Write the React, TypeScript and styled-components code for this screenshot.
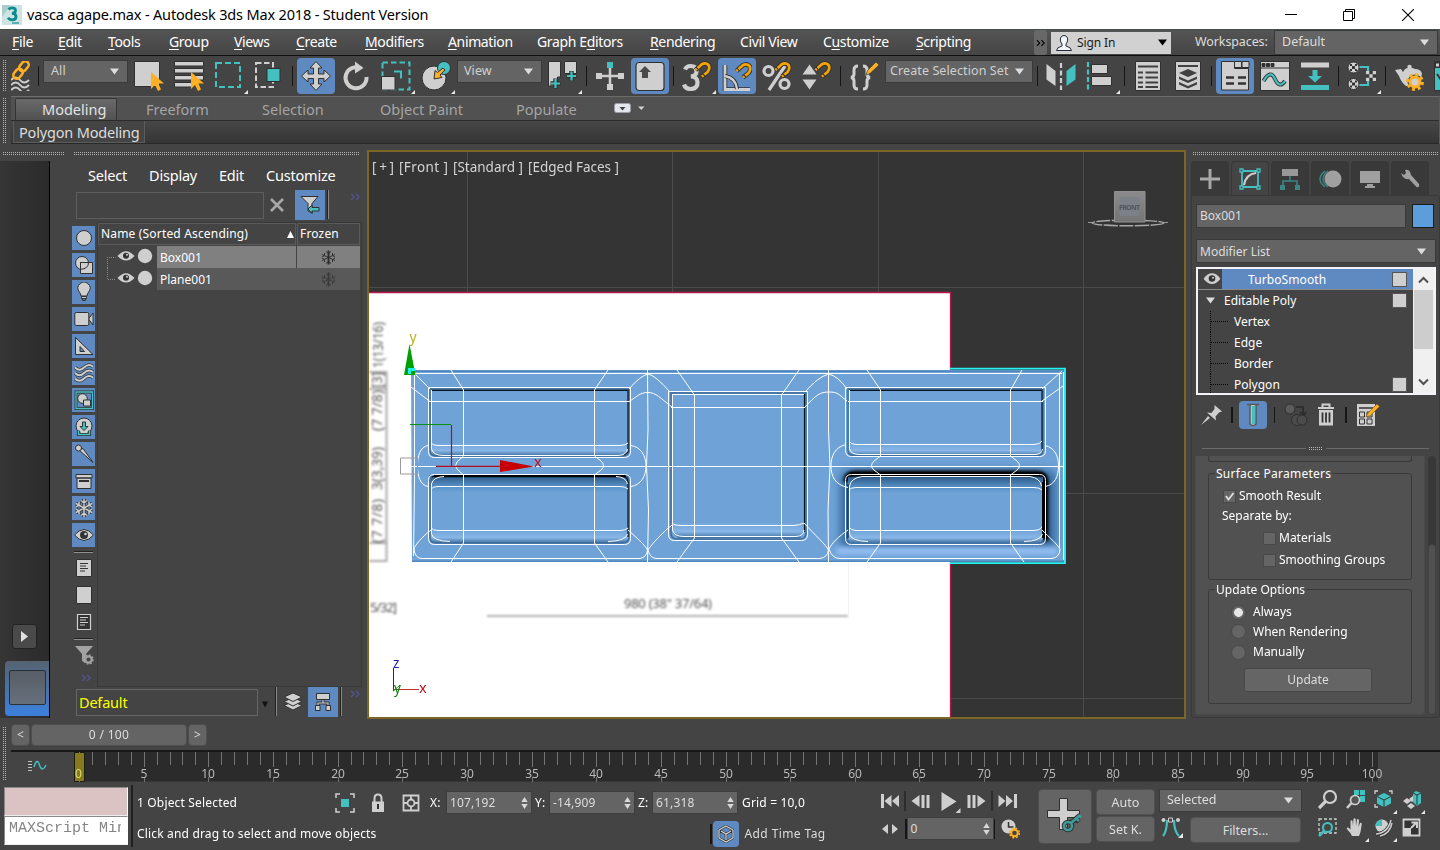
import React from 'react';
import styled, { createGlobalStyle, css } from 'styled-components';

const C = {
  bg: '#444444', field: '#646464', light: '#cfcfcf', teal: '#45c0c0', orange: '#fdb022',
  blue: '#5f8ac1', dark: '#2f2f2f', edge: '#393939', text: '#ffffff', muted: '#dddddd',
};

const Global = createGlobalStyle`
  * { box-sizing: border-box; }
  html, body { margin: 0; padding: 0; overflow: hidden; background: ${C.bg}; }
  body, button { font-family: "Noto Sans", "Open Sans", sans-serif; }
  svg { display: block; flex: none; }
`;

const Window = styled.div`
  width: 1440px; height: 850px; overflow: hidden; background: ${C.bg}; color: ${C.text};
  display: flex; flex-direction: column; font-size: 12px; line-height: 1; white-space: nowrap;
`;

/* ---------- title bar ---------- */
const TitleBar = styled.header`
  height: 29px; flex: none; background: #fff; color: #000; display: flex; align-items: center;
  font-size: 14px; padding-left: 2px;
`;
const Title = styled.h1`
  margin: 0 0 0 5px; font-size: 14.5px; font-weight: 400; flex: 1; letter-spacing: -0.17px;
`;
const CaptionButton = styled.div<{ $shift?: number }>`
  width: 46px; margin-left: 12.5px; display: flex; justify-content: center; padding-right: ${p => p.$shift ?? 0}px;
`;
const CaptionEnd = styled.div` width: 9px; `;

/* ---------- menu ---------- */
const MenuBar = styled.nav`
  height: 27px; flex: none; display: flex; align-items: center; border-top: 1px solid #454f48;
  border-bottom: 1px solid #101010; background: linear-gradient(#545454, #454545);
`;
const MenuItem = styled.span<{ $w: number }>`
  width: ${p => p.$w}px; flex: none; font-size: 14px; letter-spacing: -0.36px; text-underline-offset: 2px; padding-bottom: 2px;
  u { text-decoration-thickness: 1px; }
`;
const MoreButton = styled.div`
  width: 13px; height: 25px; border-radius: 3px; background: #686868; display: flex;
  align-items: center; justify-content: center;
`;
const SignIn = styled.div`
  width: 120px; height: 22px; margin-left: 4px; background: #d1d1d1; color: #1a1a1a; display: flex;
  align-items: center; padding: 0 4px 0 5px; font-size: 12px;
  span { flex: 1; margin-left: 5px; letter-spacing: -0.1px; }
`;
const WorkLabel = styled.span` margin-left: 24px; width: 79px; color: ${C.muted}; font-size: 12.5px; letter-spacing: -0.1px; `;

const Combo = styled.div<{ $w: number; $h?: number; $fs?: number }>`
  width: ${p => p.$w}px; height: ${p => p.$h ?? 24}px; flex: none; background: ${C.field};
  border: 1px solid #3a3a3a; color: ${C.muted}; display: flex; align-items: center;
  justify-content: space-between; padding: 0 8px 0 7px; font-size: ${p => p.$fs ?? 12}px;
`;
const Arrow = ({ c = '#dcdcdc', w = 9 }: { c?: string; w?: number }) => (
  <svg width={w} height="7" viewBox="0 0 9 7" preserveAspectRatio="none"><path d="M0 .5h9L4.500 6.500z" fill={c} /></svg>
);

/* ---------- main toolbar ---------- */
const Toolbar = styled.div` height: 40px; flex: none; display: flex; align-items: flex-start; padding-top: 2px; `;
const dots = css`
  background-image: radial-gradient(circle at 0.5px 0.5px, #b4b4b4 0.6px, transparent 0.7px);
  background-size: 2px 2px;
`;
const VGrip = styled.div<{ $h: number; $mt?: number }>`
  width: 4px; margin: ${p => p.$mt ?? 0}px 0 0 3px; height: ${p => p.$h}px; flex: none; ${dots}
`;
const HGrip = styled.div<{ $w: number }>` height: 4px; width: ${p => p.$w}px; flex: none; ${dots} `;
const ToolButton = styled.div<{ $active?: boolean; $fly?: boolean }>`
  width: 38px; height: 36px; margin-right: 2px; padding: 3px 4px; flex: none; border-radius: 4px; position: relative;
  background: ${p => (p.$active ? C.blue : 'transparent')};
  ${p => p.$fly && css`
    &::after { content: ''; position: absolute; right: 0; bottom: 0; border: 2.5px solid transparent;
      border-right-color: #e8e8e8; border-bottom-color: #e8e8e8; }
  `}
`;
const Divider = styled.div` width: 7px; height: 20px; margin-top: 8px; border-left: 1.5px solid #161616; margin-left: 2px; margin-right: -2px; flex: none; `;
const LinkIcon = styled.div` width: 29px; padding: 3px 0 0 4px; flex: none; `;

const o = { stroke: '#303030', strokeWidth: 1 };
const icons = {
  bind: <g fill="none"><path d="M0 19q5-5 9 0t9 0M0 24q5-5 9 0t9 0M0 29q5-5 9 0t9 0" stroke={C.light} strokeWidth="2" /><g stroke={C.orange} strokeWidth="2.500"><rect x="8" y="2" width="11" height="7" rx="3.500" transform="rotate(-50 13 6)" /><rect x="1" y="9" width="11" height="7" rx="3.500" transform="rotate(-50 7 12)" /></g></g>,
  select: <g><path d="M.5.5h25v25H.5z" fill={C.light} {...o} /><path d="M17 11v17l4-4 3 6 3-1.500-2.500-6H30z" fill={C.orange} /></g>,
  byName: <g><path d="M.5.5h29V5H.5zM.5 7.500h29V12H.5zM.5 14.500h29V19H.5zM.5 21.500h18V26H.5z" fill={C.light} {...o} /><path d="M17 11v17l4-4 3 6 3-1.500-2.500-6H30z" fill={C.orange} /></g>,
  region: <path d="M2 2h24v24H2z" fill="none" stroke={C.teal} strokeWidth="2" strokeDasharray="6 3" />,
  crossing: <g><path d="M2 2h17v24H2z" fill="none" stroke={C.light} strokeWidth="2" strokeDasharray="5.500 2.500" /><path d="M13 7.500h13v13H13z" fill={C.teal} {...o} /></g>,
  move: <path d="M15 .5l6 6.500h-3.500v6h5.500V9l6.500 6-6.500 6v-3.500h-5.500v5.500H21l-6 6.500L9 23h3.500v-5.500H7V21L.5 15 7 9v4h5.500V7H9z" fill={C.light} {...o} />,
  rotate: <g><path d="M20 7.500A10.500 10.500 0 1 0 25.500 16" fill="none" stroke={C.light} strokeWidth="4" /><path d="M14 .5l8.500 6.500-8.500 5.500z" fill={C.light} /></g>,
  scale: <g><path d="M1.500 1.500h27v27h-27z" fill="none" stroke={C.teal} strokeWidth="2" strokeDasharray="5.500 3" /><path d="M.5 15.500h13.500v13.500H.5z" fill={C.light} {...o} /><path d="M13 10.500h7v7" fill="none" stroke={C.teal} strokeWidth="2" /></g>,
  place: <g><circle cx="13" cy="17" r="12" fill={C.light} {...o} /><circle cx="23" cy="7" r="6.500" fill={C.teal} {...o} /><path d="M22 7l-5.500 4.500-2.500-2-1 8.500 8-1.500-2-2.500 5-5z" fill={C.orange} {...o} /></g>,
  pivot: <g><path d="M.5.5h12V16h-3v9h-9zM16.500.5h12v12H16.500z" fill={C.light} {...o} /><path d="M7.500 17.500v10M2.500 22.500h10M23.500 10v10M18.500 15h10" stroke="#333" strokeWidth="4.500" /><path d="M7.500 18v9M3 22.500h9M23.500 10.500v9M19 15h9" stroke={C.teal} strokeWidth="2.200" /></g>,
  manip: <g><path d="M15 6v18M4 15h22" stroke={C.light} strokeWidth="2.500" /><path d="M1 12h6v6H1zM23 12h6v6h-6zM12 23h6v6h-6z" fill={C.light} /><path d="M12 1h6v6h-6z" fill={C.teal} /></g>,
  keyboard: <g><rect x="1" y="1.500" width="28" height="28" rx="3" fill={C.light} stroke="#303030" strokeWidth="1.200" /><path d="M10 5l6 6h-3v6H7v-6H4z" fill="#4a4a4a" /></g>,
  snap3: <path d="M3 8.500Q4.500 5 8.500 5q6 0 6 5.200 0 4.600-5.500 5.300 6.500.3 6.500 6Q15.500 28 8.500 28 3.500 28 2 23.500" fill="none" stroke={C.light} strokeWidth="4.200" />,
  angle: <g fill="none"><path d="M3 4v24.500h25" stroke="#303030" strokeWidth="4.500" /><path d="M3 4v24.500h25" stroke={C.light} strokeWidth="2.800" /><path d="M3 15q11 2 12 13" stroke="#303030" strokeWidth="4" /><path d="M3 15q11 2 12 13" stroke={C.light} strokeWidth="2.400" /></g>,
  percent: <g fill="none" stroke={C.light} strokeWidth="3.200"><circle cx="6.500" cy="10" r="4.500" /><circle cx="22.500" cy="23" r="4.500" /><path d="M23 5L7 29" /></g>,
  spinSnap: <path d="M7.500 3.500l7 10H.5zM7.500 28.500l7-10H.5z" fill={C.light} />,
  sets: <g fill="none"><path d="M9 5q-4 0-4 4v4q0 3-3 3.500Q5 17 5 20v4q0 4 4 4M14 5q4 0 4 4v4q0 3 3 3.500-3 .5-3 3.500v4q0 4-4 4" stroke={C.light} strokeWidth="3" /><path d="M17 14l1.500-4.500L27 1l3 3-9 8.500z" fill={C.orange} stroke="#333" strokeWidth=".6" /></g>,
  mirror: <g><path d="M.5 3l9 7v15l-9-6.500z" fill={C.light} /><path d="M15 2v27" stroke={C.light} strokeWidth="2.200" strokeDasharray="5 2.500" /><path d="M29.500 3l-9 7v15l9-6.500z" fill={C.teal} /></g>,
  align: <g><path d="M2 1v28" stroke={C.teal} strokeWidth="2.200" strokeDasharray="5 2.500" /><path d="M5.500 3.500h16v9h-16zM5.500 15.500h20v9h-20z" fill={C.light} {...o} /></g>,
  list: <g><path d="M2.500.5h25v29h-25z" fill={C.light} {...o} /><path d="M5 5.500h20M5 11.500h5M12.500 11.500h12.500M5 16.500h5M12.500 16.500h12.500M5 21.500h5M12.500 21.500h12.500M5 26h5M12.500 26h12.500" stroke="#404040" strokeWidth="2" /></g>,
  layerDoc: <g><path d="M2.500.5h25v29h-25z" fill={C.light} {...o} /><path d="M5 5h20" stroke="#404040" strokeWidth="2" /><path d="M15 8l9 4-9 4-9-4zM6 15.500l9 4 9-4v2.500l-9 4-9-4zM6 21l9 4 9-4v2.500l-9 4-9-4z" fill="#404040" /></g>,
  ribbon: <g><path d="M1.500.5h13v7h14V29h-27z" fill={C.light} {...o} /><path d="M14.500.5h7v6h-7zM22 .5h7v6h-7z" fill={C.light} {...o} /><path d="M6 16.500h8M18 16.500h8M6 22.500h8M18 22.500h8" stroke="#333" strokeWidth="2.500" /></g>,
  curve: <g><path d="M.5.5h29v29H.5z" fill={C.light} {...o} /><path d="M.5 7h29M2 2.500h3v3H2zM6.500 2.500h3v3h-3zM11 2.500h3v3h-3z" stroke="#303030" fill="#303030" /><path d="M3.500 20q7-12 11.500-2t10 2" fill="none" stroke="#333" strokeWidth="4" /><path d="M3.500 20q7-12 11.500-2t10 2" fill="none" stroke={C.teal} strokeWidth="2.200" /></g>,
  merge: <g><path d="M1 1.500h28v5H1z" fill={C.light} /><path d="M1 24h28v5H1zM12.500 9h5v6H22l-7 6.500L8 15h4.500z" fill={C.teal} /></g>,
  material: <g><path d="M12 6h9v18h-9" fill="none" stroke={C.teal} strokeWidth="2.200" />{[[6.5, 6.5], [6.5, 23]].map(([x, y]) => <g key={y}><circle cx={x} cy={y} r="5.500" fill={C.light} {...o} /><path d={`M${x - 1.5} ${y - 1.5}h3v3h-3zM${x - 3.5} ${y - 3.5}h2v2h-2zM${x + 1.5} ${y - 3.5}h2v2h-2zM${x - 3.5} ${y + 1.5}h2v2h-2zM${x + 1.5} ${y + 1.5}h2v2h-2z`} fill="#333" /></g>)}<path d="M19 10h10v10H19z" fill="#383838" /><path d="M19 10h3.300v3.300H19zM25.700 10H29v3.300h-3.300zM22.300 13.300h3.400v3.400h-3.400zM19 16.700h3.300V20H19zM25.700 16.700H29V20h-3.300z" fill={C.light} /></g>,
  teapot: <g><path d="M1 9l6-1 2 3 2-3q5-3 10 0 6 0 7 5l-3 8-7 4h-6q-5-4-7-10z" fill={C.light} /><circle cx="15.500" cy="6" r="2.200" fill={C.light} /><circle cx="21" cy="21" r="7.500" fill="#444" /><circle cx="21" cy="21" r="7.500" fill="none" stroke={C.orange} strokeWidth="2.800" strokeDasharray="3 2.890" /><circle cx="21" cy="21" r="5" fill={C.light} stroke={C.orange} strokeWidth="3" /></g>,
  frame: <g><path d="M.5.5h29v29H.5z" fill={C.teal} {...o} /><path d="M1 1h28v6H1z" fill="#333" /><path d="M2 2.500h3v3H2z" fill={C.light} /><path d="M3 13l4 6" stroke="#333" strokeWidth="2" /></g>,
};
type IconName = keyof typeof icons;
const Magnet = ({ x = 12, y = 0 }: { x?: number; y?: number }) => (
  <g transform={`translate(${x} ${y})`} fill="none">
    <path d="M1.500 9l6-5.500q4-2.500 7 .5 2 3.500-1 7L8 15.500" stroke="#333" strokeWidth="4.500" />
    <path d="M1.500 9l6-5.500q4-2.500 7 .5 2 3.500-1 7L8 15.500" stroke="#f6a400" strokeWidth="2.700" />
    <path d="M2.800 7.800l.8-.7M9.300 14.300l.8-.8" stroke="#333" strokeWidth="3.500" />
  </g>
);
const Icon = ({ name }: { name: IconName }) => (
  <svg width="30" height="30" viewBox="0 0 30 30">
    {icons[name]}
    {name === 'snap3' && <Magnet x={12} />}
    {name === 'angle' && <Magnet x={13} y={1} />}
    {name === 'percent' && <Magnet x={12} />}
    {name === 'spinSnap' && <Magnet x={12} />}
  </svg>
);
const Tool = ({ name, active, fly }: { name: IconName; active?: boolean; fly?: boolean }) => (
  <ToolButton $active={active} $fly={fly}><Icon name={name} /></ToolButton>
);
const ToolCombo = styled(Combo)<{ $pl?: number }>`
  margin: 2px 2px 0 0; height: 23px; color: #d0d0d0; padding: 0 8px 0 ${p => p.$pl ?? 7}px; font-size: 12.5px; letter-spacing: 0.1px;
`;

/* ---------- ribbon ---------- */
const Ribbon = styled.div` height: 48px; flex: none; display: flex; `;
const RibbonBody = styled.div` flex: 1; margin-left: 4px; border-top: 1px solid #6c6c6c; border-right: 1px solid #5c5c5c; `;
const RibbonTabs = styled.div`
  height: 24px; background: #515151; border-bottom: 1px solid #2b2b2b; display: flex; align-items: center;
  padding-left: 4px; font-size: 14.5px; color: #a4a4a4;
`;
const RibbonTab = styled.span<{ $w: number; $on?: boolean }>`
  width: ${p => p.$w}px; flex: none; padding-top: 2px;
  ${p => p.$on && css`
    height: 22px; align-self: flex-end; padding: 3px 0 0 26px; color: #e2e2e2; border: 1px solid #353535;
    border-bottom: 0; border-radius: 2px 2px 0 0; background: linear-gradient(#6a6a6a, #515151); margin-right: 29px;
  `}
`;
const RibbonPanel = styled.div`
  height: 23px; background: linear-gradient(#474747, #353535); border-bottom: 1px solid #282828;
  padding-left: 2px; display: flex;
`;
const PanelTag = styled.span`
  width: 132px; height: 22px; border: 1px solid #5c5c5c; border-top: 0; padding: 4px 0 0 5px; color: #dcdcdc; font-size: 14.5px;
  background: #444; letter-spacing: -0.18px;
`;

/* ---------- work area ---------- */
const Work = styled.main` height: 575px; flex: none; display: flex; `;
const LeftStrip = styled.aside` width: 50px; flex: none; display: flex; flex-direction: column; padding-top: 8px; `;
const LeftDark = styled.div`
  flex: none; margin-top: 5px; height: 557px; border-right: 1px solid #000; background: linear-gradient(90deg, #353535, #2b2b2b);
  display: flex; flex-direction: column; justify-content: flex-end; overflow: hidden;
`;
const PlayTab = styled.div`
  width: 25px; height: 25px; margin: 0 0 12px 12px; border-radius: 3px; background: #4a4a4a; border: 1px solid #222;
  display: flex; align-items: center; justify-content: center;
`;
const BlueTile = styled.div`
  height: 55px; margin: 0 0 2px 5px; border-radius: 4px 0 0 4px; padding: 9px 3px 10px 4px;
  background: linear-gradient(#566270, #3c7fd9 92%);
`;
const TileFace = styled.div` height: 35px; border: 1.5px solid #2a3038; border-radius: 2px; background: linear-gradient(#585d66, #66707c); `;

const Explorer = styled.section` width: 317px; flex: none; display: flex; flex-direction: column; padding: 8px 0 0 22px; `;
const GripRow = styled.div<{ $ml: number }>` height: 4px; display: flex; margin-left: ${p => p.$ml}px; `;
const ExpMenu = styled.div` display: flex; height: 18px; margin-top: 10px; padding-left: 16px; font-size: 14.5px; align-items: center; `;
const ExpMenuItem = styled.span<{ $w: number }>` width: ${p => p.$w}px; letter-spacing: -0.2px; `;
const SearchRow = styled.div` height: 30px; margin-top: 6px; display: flex; padding-left: 4px; `;
const SearchBox = styled.div` width: 188px; height: 27px; margin-top: 2px; border: 1px solid #5e5e5e; `;
const ClearMark = styled.div` width: 31px; padding: 8px 0 0 6px; `;
const SquareButton = styled.div<{ $on?: boolean }>`
  width: 30px; height: 30px; background: ${p => (p.$on ? C.blue : 'transparent')}; display: flex; align-items: center; justify-content: center;
`;
const ThinSep = styled.div` width: 2px; height: 29px; border-left: 1px solid #222; border-right: 1px solid #888; margin: 0 1px 0 2px; `;
const Chevrons = ({ c = '#55559a', w = 10 }: { c?: string; w?: number }) => (
  <svg width={w} height="8" viewBox="0 0 10 8"><path d="M1 .8L4.200 4 1 7.200M6 .8L9.200 4 6 7.200" fill="none" stroke={c} strokeWidth="1.200" /></svg>
);
const Overflow = styled.div<{ $ml: number; $mt: number }>` margin: ${p => p.$mt}px 0 0 ${p => p.$ml}px; `;
const ExpBody = styled.div` display: flex; margin-top: 2px; height: 465px; `;
const FilterStrip = styled.div` width: 25px; padding-top: 4px; display: flex; flex-direction: column; `;
const FilterCell = styled.div<{ $on?: boolean }>`
  width: 23px; height: 24px; margin-bottom: 3px; flex: none; background: ${p => (p.$on ? C.blue : 'transparent')};
  display: flex; align-items: center; justify-content: center;
`;
const FilterSep = styled.div` width: 19px; height: 2px; margin: 1px 0 3px 2px; border-top: 1px solid #222; border-bottom: 1px solid #909090; flex: none; `;
const Tree = styled.div` width: 265px; border: 1px solid ${C.edge}; `;
const TreeHead = styled.div` display: flex; height: 22px; gap: 1px; margin-bottom: 1px; `;
const HeadCell = styled.div<{ $w: number }>`
  width: ${p => p.$w}px; border: 1px solid #5a5a5a; padding: 0 1px 0 2px; display: flex; align-items: center; justify-content: space-between;
  letter-spacing: 0.17px;
`;
const TreeRow = styled.div` display: flex; height: 22px; align-items: stretch; `;
const TreeGutter = styled.div` width: 59px; `;
const NameCell = styled.div<{ $sel?: boolean }>`
  width: 140px; background: ${p => (p.$sel ? '#808080' : '#595959')}; padding: 2px 0 0 3px; display: flex; align-items: center;
  border-right: 1px solid ${p => (p.$sel ? '#444' : '#595959')};
`;
const FrozenCell = styled(NameCell)` width: 63px; padding: 0; justify-content: center; border-right: 0; `;
const ExpFoot = styled.div` display: flex; height: 30px; padding-left: 4px; `;
const LayerBox = styled.div` width: 182px; height: 27px; margin-top: 2px; border: 1px solid #666; color: #ffff00; font-size: 14.5px; padding: 5px 0 0 2px; letter-spacing: -0.2px; `;
const LayerArrow = styled.div` width: 15px; padding: 14px 0 0 4px; `;

const Flake = ({ c }: { c: string }) => (
  <svg width="15" height="15" viewBox="0 0 15 15" fill="none" stroke={c}>
    <path d="M7.500.5v14" strokeWidth="1.800" />
    <path d="M1 4.500l13 6M14 4.500l-13 6M5 1.500l2.500 2 2.500-2M5 13.500l2.500-2 2.500 2M1 7l2.500-1.500V3M14 7l-2.500-1.500V3M1 8l2.500 1.500V12M14 8l-2.500 1.500V12" strokeWidth=".9" />
  </svg>
);
const Eye = ({ w = 18 }: { w?: number }) => (
  <svg width={w} height={w * 0.64} viewBox="0 0 18 11.500"><path d="M.5 5.700Q9-5 17.500 5.700 9 16.500.5 5.700z" fill={C.light} /><circle cx="9" cy="5.500" r="3.300" fill="#333" /><circle cx="10" cy="4.700" r="1" fill={C.light} /></svg>
);
const crystal = 'M10 1v18M2 5.500l16 9M18 5.500l-16 9M7 2.500L10 5l3-2.500M7 17.500l3-2.500 3 2.500M2 9l3-2V4M15 16v-3l3-2M18 9l-3-2V4M5 16v-3L2 11';
const strip: React.ReactNode[] = [
  <circle cx="10" cy="10" r="7.500" fill={C.light} {...o} />,
  <g fill={C.light} {...o}><circle cx="8" cy="8" r="6.500" /><path d="M6.500 7.500h12v11h-12z" /><path d="M6.500 14.300V7.500h8Q14.500 14 6.500 14.300z" /></g>,
  <g fill={C.light} {...o}><path d="M7 14q0-2-2-4.500A6 6 0 1 1 15 9.500Q13 12 13 14z" /><path d="M7.500 14.500h5v2h-5zM8.500 17h3v1.500h-3z" /></g>,
  <g fill={C.light} {...o}><path d="M14.500 10l4.500-6v12z" /><rect x=".8" y="3.500" width="14" height="13" rx="1.500" /></g>,
  <path d="M1.500 1.500V18.500H19zM6 10.500l4.500 5H6z" fill={C.light} fillRule="evenodd" {...o} />,
  <g fill="none">{[4.5, 10, 15.5].map(y => <g key={y}><path d={`M1 ${y}q4.500 4.500 9 0t9-1`} stroke="#333" strokeWidth="3.400" /><path d={`M1 ${y}q4.500 4.500 9 0t9-1`} stroke={C.light} strokeWidth="1.900" /></g>)}</g>,
  <g><path d="M2 2h16.500v16.500H2z" fill="none" stroke="#303030" strokeWidth="2.800" /><path d="M2 2h16.500v16.500H2z" fill="none" stroke={C.teal} strokeWidth="1.300" /><circle cx="8.500" cy="8.500" r="4.800" fill={C.light} {...o} /><path d="M9.500 10h7v6h-7z" fill={C.light} {...o} /></g>,
  <g><circle cx="10" cy="9" r="8" fill={C.light} {...o} /><path d="M8.500 5h3v4.500H14l-4 4-4-4h2.500z" fill={C.teal} {...o} /><path d="M4.500 13.500v4h11v-4" fill="none" stroke="#303030" strokeWidth="3.200" /><path d="M4.500 13.500v4h11v-4" fill="none" stroke={C.teal} strokeWidth="1.500" /></g>,
  <g fill={C.light} {...o}><path d="M5 6l4-1.500L19 18.500z" /><circle cx="4.500" cy="4" r="3" /></g>,
  <g fill={C.light} {...o}><path d="M3 7h14v10.500H3zM2 3.500h16v3.500H2z" /><path d="M5 10h10" strokeWidth="2" /></g>,
  <g fill="none"><path d={crystal} stroke="#333" strokeWidth="3.200" /><path d={crystal} stroke={C.light} strokeWidth="1.500" /></g>,
  <g><path d="M.5 10Q10-1 19.500 10 10 21 .5 10z" fill={C.light} {...o} /><circle cx="10" cy="10" r="4" fill="#333" /><circle cx="11.500" cy="9" r="1.300" fill={C.light} /></g>,
];
const docIcons: React.ReactNode[] = [
  <g><path d="M2.500 1.500h15v17h-15z" fill={C.light} {...o} /><path d="M6 5.500h8M6 8h6M6 10.500h8M6 13h5" stroke="#333" /></g>,
  <path d="M2.500 1.500h15v17h-15z" fill={C.light} {...o} />,
  <g><path d="M3.500 2.500h13v15h-13z" fill="#333" stroke={C.light} strokeWidth="1.200" /><path d="M6 5.500h8M6 8h6M6 10.500h8M6 13h5" stroke={C.light} /></g>,
];
const S20 = ({ children }: { children?: React.ReactNode }) => <svg width="20" height="20" viewBox="0 0 20 20">{children}</svg>;

/* ---------- viewport ---------- */
const Viewport = styled.section` width: 819px; height: 569px; margin-top: 6px; border: 2px solid #7b6626; flex: none; background: #343434; `;

const frame = (x1: number, y1: number, x2: number, y2: number, topR = 0, botR = 6) =>
  `M${x1 + topR} ${y1}H${x2 - topR}Q${x2} ${y1} ${x2} ${y1 + topR}V${y2 - botR}Q${x2} ${y2} ${x2 - botR} ${y2}H${x1 + botR}Q${x1} ${y2} ${x1} ${y2 - botR}V${y1 + topR}Q${x1} ${y1} ${x1 + topR} ${y1}z`;

const Scene = () => (
  <svg width="815" height="565" viewBox="369 152 815 565" fontFamily="Noto Sans, sans-serif">
    <defs>
      <filter id="soft" x="-10%" y="-10%" width="120%" height="120%"><feGaussianBlur stdDeviation="0.900" /></filter>
      <filter id="deep" x="-20%" y="-30%" width="140%" height="160%"><feGaussianBlur stdDeviation="4.500" /></filter>
      <filter id="mid" x="-20%" y="-30%" width="140%" height="160%"><feGaussianBlur stdDeviation="1.800" /></filter>
      <filter id="glow" x="-20%" y="-100%" width="140%" height="300%"><feGaussianBlur stdDeviation="2.500" /></filter>
      <linearGradient id="cup" x1="0" y1="0" x2="0" y2="1"><stop offset="0" stopColor="#6fa3d7" /><stop offset=".8" stopColor="#6fa3d7" /><stop offset=".92" stopColor="#88b6e8" /><stop offset="1" stopColor="#3f709f" /></linearGradient>
      <linearGradient id="cupLow" x1="0" y1="0" x2="0" y2="1"><stop offset="0" stopColor="#2c5a86" /><stop offset=".16" stopColor="#5a93ca" /><stop offset=".25" stopColor="#6fa3d7" /><stop offset=".8" stopColor="#6fa3d7" /><stop offset=".92" stopColor="#88b6e8" /><stop offset="1" stopColor="#3f709f" /></linearGradient>
      <linearGradient id="lip" x1="0" y1="0" x2="0" y2="1"><stop offset="0" stopColor="#6fa3d7" /><stop offset=".6" stopColor="#88b6e8" /><stop offset="1" stopColor="#3f709f" /></linearGradient>
      <linearGradient id="cube" x1="0" y1="0" x2="0" y2="1"><stop offset="0" stopColor="#8b8b8b" /><stop offset="1" stopColor="#747474" /></linearGradient>
      <clipPath id="body"><path d="M411 370H1065V562H411z" /></clipPath>
    </defs>
    <path d="M467.500 152V717M672.500 152V717M878.500 152V717M1083.500 152V717M369 287.500H1184M369 493.500H1184M369 698.500H1184" stroke="#4b4b4b" />
    <path d="M369 293H950V717H369z" fill="#fff" />
    <path d="M369 292.500H950.500V717" fill="none" stroke="#b8174e" strokeWidth="1.300" />
    <g filter="url(#soft)" fill="#555">
      <path d="M369 372H386.500V561H369M369 389H386M369 543H386" fill="none" stroke="#aaa" strokeWidth="2" />
      <g fontSize="14">
        <text transform="translate(382 543) rotate(-90)" textLength="44">(7 7/8)</text>
        <text transform="translate(382 490) rotate(-90)" textLength="43" lengthAdjust="spacingAndGlyphs">3(3,39)</text>
        <text transform="translate(382 431) rotate(-90)" textLength="41">(7 7/8)</text>
        <text transform="translate(382 388) rotate(-90)" textLength="16" lengthAdjust="spacingAndGlyphs">[3]</text>
        <text transform="translate(383 368) rotate(-90)" textLength="46" lengthAdjust="spacingAndGlyphs">1(13/16)</text>
      </g>
      <text x="370" y="612" fontSize="13" textLength="27">5/32]</text>
      <text x="624" y="608" fontSize="13" textLength="88">980 (38" 37/64)</text>
      <path d="M487 616H848" stroke="#999" strokeWidth="1.600" />
    </g>
    <path d="M848.500 562V616" stroke="#f2f2f2" />

    <path d="M411 370H1065V562H412z" fill="#6fa3d7" />
    <path d="M411 371.200H1064M412 561.200H1064" stroke="#4f86bb" strokeWidth="1.600" />
    <g clipPath="url(#body)">
      <rect x="840" y="470" width="216" height="80" rx="8" fill="#27598a" opacity=".75" filter="url(#deep)" />
      <rect x="836" y="547" width="222" height="8" rx="4" fill="#94c0f4" filter="url(#glow)" />
      <path d="M846 482Q846 473 856 473H1036Q1046 473 1046 482V541" fill="none" stroke="#000" strokeWidth="5" filter="url(#mid)" />
      <path d="M850 474.500H1041Q1045 476 1045 484V538" fill="none" stroke="#000" strokeWidth="4" />
      <path d={frame(430, 389, 629, 456)} fill="url(#cup)" stroke="#3c6b98" strokeWidth="1.400" />
      <path d={frame(430, 476, 629, 543)} fill="url(#cupLow)" stroke="#3c6b98" strokeWidth="1.400" />
      <path d={frame(671, 393, 806, 539)} fill="#6fa3d7" stroke="#3c6b98" strokeWidth="1.400" />
      <path d="M673 522H804V532L800 538H678L673 532z" fill="url(#lip)" />
      <path d={frame(848, 389, 1043, 456)} fill="url(#cup)" stroke="#3c6b98" strokeWidth="1.400" />
      <path d={frame(848, 477, 1043, 543)} fill="url(#cupLow)" />
      <path d="M848 484V538" stroke="#1a3a5a" strokeWidth="1.500" />
      <path d="M431 390.300H628V452L624 455M432 477Q434 476 440 476H620Q628 476 628 482V537M672 394.500H804.500V532M849 390.300H1042V452" fill="none" stroke="#0a121c" strokeWidth="1.200" />
      <path d="M434 476H626" stroke="#000" strokeWidth="2.500" />
      <path d="M1043.500 482V538" stroke="#000" strokeWidth="3" />
      <g fill="none" stroke="#fff" strokeWidth="1">
        <path d="M412 373.500H1062M411 466.500H1064M414.500 372V480L413.500 556M647.500 370L648 430 646.500 466 648.500 510 647.500 562M828.500 370V430L830 466 828 510 828.500 562M1059.500 374V548M1063.500 372V560" />
        <path d={frame(428.5, 387.5, 630.5, 457.5)} /><path d={frame(428.5, 474.5, 630.5, 544.5, 6)} />
        <path d={frame(668.5, 391.5, 807.5, 540.5)} />
        <path d={frame(845.5, 387.5, 1045.5, 456.5)} /><path d={frame(845.5, 474.5, 1045.5, 544.5, 6)} />
        <path d="M444 476.500Q433 477 431.500 484V534Q433 541 450 541.500M616 476.500Q626 477 627.500 484M627.500 534Q626 541 608 541.500M862 476.500Q851 478 849.500 486V534Q851 541 868 541.500M862 476.500H1030Q1040 478 1041.500 486M1042.500 534Q1041 541 1024 541.500" />
        <path d="M431.500 390V449Q433 455.500 444 455.500H618Q627 455 627.500 449M849.500 390V449Q851 454.500 860 454.500H1035Q1042 454 1042.500 449M672.500 395V530Q674 536.500 684 536.500H796Q804 536 804 530M672 394.500H804" />
        <path d="M430 401.500H629M431 443Q433 445.500 438 445.500H620Q625 445.500 628 443M431 489Q433 486.500 438 486.500H620Q625 486.500 628 489M431 528Q433 530.500 438 530.500H620Q625 530.500 628 528M848 401.500H1043M849 441Q851 444.500 856 444.500H1034Q1040 444.500 1042 441M849 490Q851 487.500 856 487.500H1034Q1040 487.500 1042 490M849 527Q851 530.500 856 530.500H1034Q1040 530.500 1042 527M671 407.500H805M672 523Q674 525.500 680 525.500H794Q800 525 804 523" />
        <path d="M451 370L463.500 390V456L457 462Q454 466 457 469L463.500 475V543L451 562M608 370L594.500 390V456L601 461Q606 466 601 470L594.500 475V543L608 562" />
        <path d="M867 370L880.500 390V456L874 461Q869 466 874 470L880.500 475V543L867 562M1022 370L1010.500 390V456L1017 461Q1022 466 1017 470L1010.500 475V543L1024 562" />
        <path d="M677 370L694.500 395V538L677 562M799 370L781.500 395V538L799 562" />
        <path d="M415 374L430 389M411 387L430 401.500M629 389Q640 376 648 374Q655 375 670 392M629 401.500C638 396 640 392.500 648 392.500S660 398 672 407M805 392Q818 377 828.500 374Q838 376 847 389M805 407C816 395 820 392 829 392S838 394 847 401M1042 389L1062 371M1042 401L1063 386" />
        <path d="M428 445.500C420 447 417.500 456 417.500 466S420 485 428 486.500M631 445.500C641 447 646 456 646 466S641 485 631 486.500M846 444.500C835 447 831 456 831 466S835 485 848 487.500M1045 445.500C1055 448 1058.500 456 1058.500 466S1055 485 1045 486.500" />
        <path d="M431 530C422 537 415 545 414 549Q415 558.500 422 558.500H640Q647 557 647.500 550C645 545 636 537 628 530M672 525C662 533 651 545 648 550Q650 558.500 657 558.500H820Q828 557 828.500 550C826 545 815 535 804 523M848 530C838 537 832 543 829 549Q832 558.500 840 558.500H1052Q1060 557 1060 549C1057 544 1050 538 1042 530" />
      </g>
    </g>
    <path d="M950 368.700H1065V563.200H950" fill="none" stroke="#25f3f3" strokeWidth="1.800" />

    <path d="M400.500 458V474H417.500V458z" fill="none" stroke="#9a9a9a" strokeWidth="1" />
    <path d="M410 424.500H451" stroke="#109010" strokeWidth="1.200" /><path d="M451.500 425V466M436 466.300H500" stroke="#b01020" strokeWidth="1.200" fill="none" />
    <path d="M500 460L534 466.500 500 472z" fill="#c80000" />
    <path d="M409.500 344L415.500 375H404z" fill="#00a000" /><path d="M408 368H415V374H408z" fill="#20f0f0" /><path d="M411 371H415V375H411z" fill="#00a000" />
    <text x="409.500" y="342" fontSize="14" fill="#b8b020">y</text>
    <text x="534" y="467" fontSize="14.500" fill="#b81420">x</text>
    <path d="M393.500 668V691" stroke="#2020a8" /><path d="M393.500 689.500H419" stroke="#c03030" /><path d="M393.500 691L400 685" stroke="#20a020" />
    <text x="393" y="667.500" fontSize="13.500" fill="#2020a8">z</text><text x="394" y="693" fontSize="13.500" fill="#108010">y</text><text x="419" y="693" fontSize="14.500" fill="#b81420">x</text>

    <g fontSize="13.500" fill="#d4d4d4">
      <text x="372" y="171.500" textLength="22">[ + ]</text>
      <text x="399" y="171.500" textLength="49">[Front ]</text>
      <text x="453" y="171.500" textLength="70">[Standard ]</text>
      <text x="528" y="171.500" textLength="91">[Edged Faces ]</text>
    </g>

    <ellipse cx="1128" cy="223" rx="36" ry="2.800" fill="none" stroke="#a8a8a8" strokeWidth="1.400" strokeDasharray="14 1.500" />
    <path d="M1088 222.500h5M1163 222.500h5" stroke="#999" />
    <path d="M1114.500 191.500H1145V222H1114.500z" fill="url(#cube)" stroke="#909090" /><path d="M1120 197H1139.500V216H1120z" fill="#7b8187" />
    <text x="1119" y="209.500" fontSize="7" fontWeight="700" fill="#50565e" textLength="21">FRONT</text>
  </svg>
);

/* ---------- command panel ---------- */
const Command = styled.aside` width: 249px; margin-left: 5px; flex: none; padding-top: 8px; `;
const CmdTabs = styled.div` display: flex; gap: 2px; margin-top: 5px; `;
const CmdTab = styled.div<{ $on?: boolean }>`
  width: 38px; height: 34px; border-radius: 4px 4px 0 0; border: 1px solid #383838; border-bottom: 0;
  background: ${p => (p.$on ? C.bg : '#393939')}; display: flex; align-items: center; justify-content: center; padding-top: 1px;
`;
const CmdBody = styled.div` height: 523px; border: 1px solid ${C.edge}; border-radius: 0 3px 3px 3px; padding: 8px 3px 0 4px; `;
const NameRow = styled.div` display: flex; justify-content: space-between; padding-right: 2px; `;
const NameField = styled.div` width: 210px; height: 24px; background: ${C.field}; border: 1px solid #3a3a3a; padding: 5px 0 0 3px; color: ${C.muted}; `;
const Swatch = styled.div` width: 22px; height: 24px; background: #5d9dd9; border: 1px solid #1c1c1c; `;
const ModCombo = styled(Combo)` margin-top: 11px; padding: 1px 9px 0 3px; `;
const Stack = styled.div` width: 240px; height: 128px; margin-top: 4px; border: 2px solid #f4f4f8; display: flex; overflow: hidden; `;
const StackRows = styled.div` flex: 1; `;
const StackRow = styled.div<{ $sel?: boolean }>`
  height: 21px; display: flex; align-items: center; border-bottom: ${p => (p.$sel ? '1px solid #8a8a8a' : '0')};
`;
const StackLabel = styled.div<{ $indent: number; $sel?: boolean }>`
  flex: 1; height: 20px; display: flex; align-items: center; justify-content: space-between; padding: ${p => (p.$sel ? 1 : 0)}px 6px 0 ${p => p.$indent}px;
  background: ${p => (p.$sel ? C.blue : 'transparent')}; letter-spacing: ${p => (p.$sel ? '0.1px' : '0')};
`;
const StackGutter = styled.div<{ $w: number; $pl?: number }>` width: ${p => p.$w}px; padding-left: ${p => p.$pl ?? 0}px; flex: none; display: flex; justify-content: center; `;
const StateBox = styled.i` width: 15px; height: 15px; background: ${C.light}; border: 1px solid #555; `;
const StackScroll = styled.div`
  width: 21px; background: #f0f0f0; display: flex; flex-direction: column; align-items: center; justify-content: space-between; padding: 7px 0;
`;
const ScrollThumb = styled.div` width: 19px; height: 59px; background: #cdcdcd; margin: 0 0 23px; `;
const StackTools = styled.div` height: 30px; margin-top: 5px; display: flex; align-items: center; padding-left: 5px; `;
const StackTool = styled.div<{ $on?: boolean; $ml?: number }>`
  width: 28px; height: 28px; border-radius: 4px; margin-left: ${p => p.$ml ?? 0}px; display: flex; align-items: center; justify-content: center;
  background: ${p => (p.$on ? C.blue : 'transparent')};
`;
const StackSep = styled.div<{ $ml: number }>` width: 1.5px; height: 16px; background: #161616; margin-left: ${p => p.$ml}px; `;
const Splitter = styled.div` margin: 15px 7px 0 6px; height: 7px; display: flex; align-items: center; gap: 3px; `;
const SplitLine = styled.div` flex: 1; height: 1px; background: #6a6a6a; `;
const RollWrap = styled.div` display: flex; margin: 4px 0 0 -1px; height: 259px; `;
const Rollout = styled.div` width: 230px; background: #515151; border-radius: 0 0 3px 3px; border: 1px solid #494949; border-top: 0; padding: 0 12px; `;
const GroupTail = styled.div` height: 6px; border: 1px solid ${C.edge}; border-top: 0; border-radius: 0 0 3px 3px; `;
const Group = styled.fieldset<{ $h: number; $mt: number; $ls?: number }>`
  height: ${p => p.$h}px; margin: ${p => p.$mt}px 0 0; padding: 0; border: 1px solid ${C.edge}; border-radius: 3px; min-width: 0;
  legend { margin-left: 6px; padding: 0 1px; line-height: 13px; letter-spacing: ${p => p.$ls ?? 0}px; }
`;
const OptRow = styled.div<{ $ml: number; $h: number; $mt?: number }>` height: ${p => p.$h}px; margin: ${p => p.$mt ?? 0}px 0 0 ${p => p.$ml}px; display: flex; align-items: center; gap: 3px; `;
const Check = styled.div` width: 13px; height: 13px; background: #656565; border: 1px solid #494949; `;
const Radio = styled.div<{ $on?: boolean }>`
  width: 15px; height: 15px; border-radius: 50%; border: 1px solid #494949; margin-right: 4px;
  background: ${p => (p.$on ? 'radial-gradient(circle, #e6e6e6 4px, #666 4.8px)' : '#656565')};
`;
const UpdateButton = styled.div`
  width: 128px; height: 24px; margin: 6px 0 0 35px; border-radius: 3px; border: 1px solid #484848; background: #656565; color: ${C.muted};
  display: flex; align-items: center; justify-content: center;
`;
const RollScroll = styled.div` width: 8px; margin-left: 3px; background: #383838; border-radius: 4px; padding-top: 88px; `;
const RollThumb = styled.div` height: 171px; border-radius: 4px; background: #515151; border: 1px solid #424242; `;

/* ---------- time slider ---------- */
const TimeRow = styled.div` height: 64px; flex: none; display: flex; `;
const TimeBody = styled.div` width: 1429px; margin-left: 4px; `;
const SliderRow = styled.div` height: 31px; display: flex; gap: 1px; padding-top: 5px; `;
const SliderButton = styled.div<{ $w: number }>`
  width: ${p => p.$w}px; height: 22px; background: ${C.field}; border: 1px solid #4e4e4e; border-radius: 4px; color: ${C.muted};
  display: flex; align-items: center; justify-content: center; letter-spacing: ${p => (p.$w > 30 ? 0.3 : 0)}px;
`;
const TrackRow = styled.div` height: 33px; border-top: 2px solid #181818; display: flex; `;
const TrackKey = styled.div` width: 63px; padding: 8px 0 0 16px; `;

const frames = Array.from({ length: 101 }, (_, i) => i);
const fx = (f: number) => Math.round(5 + f * 12.93) + 0.5;
const Track = () => (
  <svg width="1366" height="30" viewBox="0 0 1366 30" fontFamily="Noto Sans, sans-serif">
    <path d="M0 0h1304v29.500H0z" fill="#2b2b2b" />
    <path d="M0 0h11v30H0z" fill="#1c1c10" /><path d="M1 1h9v28H1z" fill="#857b1e" />
    {frames.map(f => <path key={f} d={f % 5 ? `M${fx(f)} 0v13` : `M${fx(f)} 0v15M${fx(f)} 25v5`} stroke="#747474" />)}
    {frames.filter(f => f % 5 === 0).map(f => (
      <text key={f} x={fx(f) - (f ? 0.5 : 1)} y="25.500" fontSize="12" textAnchor="middle" fill={f ? '#b8b8b8' : '#e0d870'}>{f}</text>
    ))}
  </svg>
);

/* ---------- status bar ---------- */
const Status = styled.footer` height: 67px; flex: none; display: flex; `;
const Listener = styled.div` width: 124px; margin: 4px 0 0 4px; flex: none; `;
const ListenerLine = styled.div<{ $pink?: boolean }>`
  height: 29px; background: ${p => (p.$pink ? '#dcc3c3' : '#fff')}; border: 1.5px solid #8a8a8a; border-right-color: #fff; border-bottom-color: #eee;
  color: #858585; font: 15px "Liberation Mono", monospace; padding: 3px 0 0 4px; letter-spacing: 0;
  span { display: block; width: 112px; overflow: hidden; }
`;
const StatusSep = styled.div` width: 2px; height: 62px; margin: 2px 0 0 3px; background: #202020; flex: none; `;
const Info = styled.div` width: 745px; margin-left: 3px; padding-top: 3px; flex: none; `;
const InfoRow = styled.div` height: 31px; display: flex; align-items: center; padding-left: 1px; padding-top: 2px; `;
const InfoText = styled.span<{ $w: number; $ml?: number; $dim?: boolean }>`
  width: ${p => p.$w}px; margin-left: ${p => p.$ml ?? 0}px; flex: none; color: ${p => (p.$dim ? '#ddd' : '#fff')}; letter-spacing: ${p => (p.$dim ? 0.4 : 0.17)}px;
`;
const Coord = styled.div<{ $w?: number }>`
  width: ${p => p.$w ?? 86}px; height: 23px; background: ${C.field}; border: 1px solid #3e3e3e; color: ${C.muted};
  display: flex; align-items: center; justify-content: space-between; padding: 0 3px 0 3px; flex: none; letter-spacing: 0.15px;
`;
const Spin = () => <svg width="7" height="12" viewBox="0 0 7 12"><path d="M3.500 0l3.200 5H.3zM3.500 12L.3 7h6.400z" fill="#d8d8d8" /></svg>;
const TagToggle = styled.div` width: 26px; height: 26px; border-radius: 4px; background: ${C.blue}; display: flex; align-items: center; justify-content: center; margin: 0 6px 0 1px; `;
const SmallSep = styled.div` width: 1.5px; height: 20px; background: #161616; flex: none; `;
const StatusGap = styled.div<{ $w: number }>` width: ${p => p.$w}px; flex: none; `;
const Playback = styled.div` width: 157px; flex: none; padding-top: 5px; `;
const PlayRow = styled.div` height: 27px; display: flex; align-items: center; `;
const KeyPad = styled.div` width: 54px; height: 55px; margin-top: 6px; border-radius: 4px; background: ${C.field}; border: 1px solid #4e4e4e; flex: none; padding: 7px 0 0 7px; `;
const Column = styled.div<{ $w: number; $ml: number; $gap?: number }>`
  width: ${p => p.$w}px; margin-left: ${p => p.$ml}px; padding-top: 6px; display: flex; flex-direction: column; gap: ${p => p.$gap ?? 1}px; flex: none;
`;
const Push = styled.div<{ $w: number }>`
  width: ${p => p.$w}px; height: 26px; background: ${C.field}; border: 1px solid #505050; border-radius: 4px; color: ${C.muted};
  display: flex; align-items: center; justify-content: center; font-size: 12.5px; padding-top: 2px;
`;
const FilterRow = styled.div` display: flex; gap: 7px; padding-left: 2px; padding-top: 3px; `;
const NavGrid = styled.div` display: grid; grid-template-columns: repeat(4, 28px); grid-auto-rows: 28px; margin-left: 15px; padding-top: 7px; `;
const NavCell = styled.div<{ $fly?: boolean }>`
  padding: 0 0 0 1px; position: relative;
  ${p => p.$fly && css`&::after { content: ''; position: absolute; right: 4px; bottom: 4px; border: 2.5px solid transparent;
      border-right-color: #e8e8e8; border-bottom-color: #e8e8e8; }`}
`;
const navIcons: [React.ReactNode, boolean][] = [
  [<g fill="none" stroke={C.light}><circle cx="12" cy="7" r="6" strokeWidth="2.200" /><path d="M7.500 11.500L1 18" strokeWidth="3.200" /></g>, false],
  [<g><path d="M8 0h5v5H8zM14 0h5v5h-5zM8 6h5v6H8zM14 6h5v6h-5z" fill={C.teal} /><circle cx="9" cy="10" r="4.500" fill="#555" stroke={C.light} strokeWidth="1.700" /><path d="M5.500 13L1 18" stroke={C.light} strokeWidth="2.600" /></g>, false],
  [<g fill="none"><path d="M1 4V1h3M15 1h3v3M1 14v3h3" stroke={C.light} strokeWidth="1.300" /><path d="M10 3l7 3.500v7L10 17l-7-3.500v-7z" fill={C.teal} /><path d="M3 6.500l7 3.500 7-3.500M10 10v7" stroke="#333" /></g>, true],
  [<g><path d="M5 8l4 3-4 3-4-3zM11 6l3 3-4 3-3-3zM9 13l4 3-4 3-4-3z" fill={C.light} /><path d="M14 1l5 2v10l-4 3-4-4V3z" fill={C.teal} /><path d="M11 3l4 2 4-2M15 5v10" stroke="#333" fill="none" /></g>, true],
  [<g fill="none"><path d="M1 1h17v14H1z" stroke={C.light} strokeWidth="1.300" strokeDasharray="3 2" /><circle cx="9.500" cy="9.500" r="4.500" stroke={C.teal} strokeWidth="2" fill="#444" /><path d="M6 13l-5 5" stroke={C.teal} strokeWidth="2.600" /></g>, false],
  [<path d="M6 18q-1-3-4-5.500L.5 10q1.500-1.500 4 1.500V3q1-1.500 2 0l.5 5 .5-7q1-1.500 2.200 0l.3 7 1-6.500q1.300-1 2 .5l-.5 7 1.500-4q1.500-.8 1.800.8L14.500 14 13 18z" fill={C.light} />, true],
  [<g fill="none"><circle cx="8" cy="8" r="6.500" fill={C.light} /><path d="M8 8V1.500A6.500 6.500 0 0 0 1.500 8z" fill={C.teal} /><path d="M2 16Q14 15 17 2M6 18q10-2 12-13" stroke="#333" strokeWidth="3" /><path d="M2 16Q14 15 17 2M6 18q10-2 12-13" stroke={C.light} strokeWidth="1.500" /></g>, true],
  [<g><path d="M1.500 1.500h16v16h-16z" fill="#333" stroke={C.light} strokeWidth="1.800" /><path d="M2 10h7v7H2z" fill={C.light} /><path d="M9 10l5-5M9.500 4.500H15V10" fill="none" stroke={C.light} strokeWidth="2" /></g>, false],
];

/* label, index of the mnemonic letter (-1 for none), slot width */
const menus: [string, number, number][] = [
  ['File', 0, 46], ['Edit', 0, 50], ['Tools', 0, 61], ['Group', 0, 65], ['Views', 0, 62], ['Create', 0, 69], ['Modifiers', 0, 83],
  ['Animation', 0, 89], ['Graph Editors', 7, 113], ['Rendering', 0, 90], ['Civil View', -1, 83], ['Customize', 1, 93], ['Scripting', 0, 118],
];

export default function App() {
  return (
    <Window>
      <Global />
      <TitleBar>
        <svg width="20" height="20" viewBox="0 0 20 20"><path d="M0 0h20v20H0z" fill="#cfe3e3" /><path d="M0 0L9 0 0 12z" fill="#a9cccc" /><path d="M6.500 4.500Q8 2.800 10 2.800q3.500 0 3.500 2.800 0 2.400-3.500 2.800 4 .3 4 3.300 0 3.100-4 3.100-2.700 0-4-2" fill="none" stroke="#0c8a90" strokeWidth="2.800" /><path d="M10 18h7" stroke="#58b0b0" strokeWidth="2" /></svg>
        <Title>vasca agape.max - Autodesk 3ds Max 2018 - Student Version</Title>
        <CaptionButton><svg width="12" height="12"><path d="M0 5.500h12" stroke="#000" /></svg></CaptionButton>
        <CaptionButton $shift={2}><svg width="12" height="12" fill="none" stroke="#000"><path d="M.5 2.500h9v9h-9zM2.500 2V.5h9v9H10" /></svg></CaptionButton>
        <CaptionButton><svg width="12" height="12"><path d="M0 0l12 12M12 0L0 12" stroke="#000" strokeWidth="1.100" /></svg></CaptionButton>
        <CaptionEnd />
      </TitleBar>

      <MenuBar>
        <MenuItem $w={12} />
        {menus.map(([t, u, w]) => (
          <MenuItem key={t} $w={w}>
            {u < 0 ? t : <>{t.slice(0, u)}<u>{t[u]}</u>{t.slice(u + 1)}</>}
          </MenuItem>
        ))}
        <MoreButton><Chevrons c="#000" w={9} /></MoreButton>
        <SignIn>
          <svg width="16" height="16" viewBox="0 0 16 16"><path d="M.5 15.500q0-3 5.500-4.500V9Q3.500 6 4.500 3q1-2.500 3.500-2.500T11.500 3q1 3-1.500 6v2q5.500 1.500 5.500 4.500z" fill="#f4f6fa" stroke="#222c3c" /></svg>
          <span>Sign In</span><Arrow c="#000" w={9} />
        </SignIn>
        <WorkLabel>Workspaces:</WorkLabel>
        <Combo $w={164} $h={25} $fs={12.5}>Default<Arrow /></Combo>
      </MenuBar>

      <Toolbar>
        <VGrip $h={32} $mt={2} />
        <LinkIcon><svg width="20" height="30" viewBox="0 0 20 30">{icons.bind}</svg></LinkIcon>
        <Divider />
        <ToolCombo $w={85}>All<Arrow /></ToolCombo>
        <Tool name="select" /><Tool name="byName" /><Tool name="region" fly /><Tool name="crossing" />
        <Divider />
        <Tool name="move" active /><Tool name="rotate" /><Tool name="scale" fly /><Tool name="place" fly />
        <ToolCombo $w={85} $pl={6}>View<Arrow /></ToolCombo>
        <Tool name="pivot" fly />
        <Divider />
        <Tool name="manip" /><Tool name="keyboard" active />
        <Divider />
        <Tool name="snap3" fly /><Tool name="angle" active /><Tool name="percent" /><Tool name="spinSnap" />
        <Divider />
        <Tool name="sets" />
        <ToolCombo $w={148} $pl={4}>Create Selection Set<Arrow /></ToolCombo>
        <Divider />
        <Tool name="mirror" /><Tool name="align" fly />
        <Divider />
        <Tool name="list" /><Tool name="layerDoc" />
        <Divider />
        <Tool name="ribbon" active /><Tool name="curve" /><Tool name="merge" />
        <Divider />
        <Tool name="material" fly />
        <Divider />
        <Tool name="teapot" /><Tool name="frame" />
      </Toolbar>

      <Ribbon>
        <VGrip $h={45} $mt={2} />
        <RibbonBody>
          <RibbonTabs>
            <RibbonTab $w={102} $on>Modeling</RibbonTab>
            <RibbonTab $w={116}>Freeform</RibbonTab>
            <RibbonTab $w={118}>Selection</RibbonTab>
            <RibbonTab $w={136}>Object Paint</RibbonTab>
            <RibbonTab $w={98}>Populate</RibbonTab>
            <svg width="31" height="11" viewBox="0 0 31 11"><rect x=".5" y=".5" width="16" height="9" rx="2" fill="#e4e6ea" stroke="#9aa0aa" /><path d="M5.500 4h6L8.500 7.500z" fill="#404450" /><path d="M24 3.500h6.500L27.300 7z" fill="#d0d0d0" /></svg>
          </RibbonTabs>
          <RibbonPanel><PanelTag>Polygon Modeling</PanelTag></RibbonPanel>
        </RibbonBody>
      </Ribbon>

      <Work>
        <LeftStrip>
          <GripRow $ml={3}><HGrip $w={62} /></GripRow>
          <LeftDark>
            <PlayTab><svg width="7" height="11"><path d="M0 0l7 5.500L0 11z" fill="#e0e0e0" /></svg></PlayTab>
            <BlueTile><TileFace /></BlueTile>
          </LeftDark>
        </LeftStrip>

        <Explorer>
          <GripRow $ml={2}><HGrip $w={285} /></GripRow>
          <ExpMenu>
            <ExpMenuItem $w={61}>Select</ExpMenuItem><ExpMenuItem $w={70}>Display</ExpMenuItem>
            <ExpMenuItem $w={47}>Edit</ExpMenuItem><ExpMenuItem $w={80}>Customize</ExpMenuItem>
          </ExpMenu>
          <SearchRow>
            <SearchBox />
            <ClearMark><svg width="14" height="14"><path d="M1 1l12 12M13 1L1 13" stroke="#a8a8a8" strokeWidth="2.600" /></svg></ClearMark>
            <SquareButton $on><S20><path d="M1 1.500h17l-6 7V18l-4-2V8.500z" fill={C.light} {...o} /><path d="M8 14l4-4v2.500h7v3.500h-7v2.500z" fill={C.teal} {...o} /></S20></SquareButton>
            <ThinSep />
            <Overflow $mt={3} $ml={20}><Chevrons /></Overflow>
          </SearchRow>
          <ExpBody>
            <FilterStrip>
              {strip.map((g, i) => <FilterCell key={i} $on><S20>{g}</S20></FilterCell>)}
              <FilterSep />
              {docIcons.map((g, i) => <FilterCell key={i}><S20>{g}</S20></FilterCell>)}
              <FilterSep />
              <FilterCell><S20><path d="M1 1h18l-7 8v9l-4-2V9z" fill="#a2a2a2" /><circle cx="14.500" cy="14.500" r="3.200" fill="#444" stroke="#a2a2a2" strokeWidth="2.200" /><circle cx="14.500" cy="14.500" r="4.500" fill="none" stroke="#a2a2a2" strokeWidth="1.500" strokeDasharray="1.800 1.700" /></S20></FilterCell>
              <Overflow $mt={4} $ml={9}><Chevrons /></Overflow>
            </FilterStrip>
            <Tree>
              <TreeHead>
                <HeadCell $w={198}>Name (Sorted Ascending)<svg width="7" height="7"><path d="M0 7L3.500 0 7 7z" fill="#fff" /></svg></HeadCell>
                <HeadCell $w={63}>Frozen</HeadCell>
              </TreeHead>
              {['Box001', 'Plane001'].map((n, i) => (
                <TreeRow key={n}>
                  <TreeGutter>
                    <svg width="58" height="22" viewBox="0 0 58 22"><path d={i ? 'M9.500 0v11.500h8' : 'M9.500 22V11.500h8'} fill="none" stroke="#8a8a8a" strokeDasharray="1 1" />
                      <path d="M19.500 10Q28 .5 36.500 10 28 19 19.500 10z" fill={C.light} /><circle cx="28" cy="9.700" r="3" fill="#333" /><circle cx="29" cy="8.800" r="1" fill={C.light} /><circle cx="47" cy="10" r="7.200" fill={C.light} /></svg>
                  </TreeGutter>
                  <NameCell $sel={!i}>{n}</NameCell>
                  <FrozenCell $sel={!i}><Flake c={i ? '#3a3a3a' : '#2c2c2c'} /></FrozenCell>
                </TreeRow>
              ))}
            </Tree>
          </ExpBody>
          <ExpFoot>
            <LayerBox>Default</LayerBox>
            <LayerArrow><Arrow c="#111" w={6} /></LayerArrow>
            <ThinSep />
            <SquareButton><S20><g fill={C.light} {...o}><path d="M10 9.500l9 4-9 4.500-9-4.500z" /><path d="M10 5.500l9 4-9 4.500-9-4.500z" /><path d="M10 1l9 4-9 4.500L1 5z" /></g></S20></SquareButton>
            <SquareButton $on><S20><path d="M10 7v4M5 14v-3h10v3" fill="none" stroke="#303030" strokeWidth="3" /><path d="M3.500 1.500h13v6h-13zM2.500 13.500h4.500v5H2.500zM13 13.500h4.500v5H13z" fill={C.light} {...o} /><path d="M10 8v3M5 13v-2h10v2" fill="none" stroke={C.light} strokeWidth="1.200" /></S20></SquareButton>
            <ThinSep />
            <Overflow $mt={3} $ml={7}><Chevrons /></Overflow>
          </ExpFoot>
        </Explorer>

        <Viewport><Scene /></Viewport>

        <Command>
          <GripRow $ml={2}><HGrip $w={245} /></GripRow>
          <CmdTabs>
            <CmdTab><svg width="20" height="20"><path d="M10 0v20M0 10h20" stroke="#a8a8a8" strokeWidth="3" /></svg></CmdTab>
            <CmdTab $on><svg width="22" height="22" viewBox="0 0 22 22" fill="none"><path d="M3 3h16v16H3z" stroke={C.teal} strokeWidth="1.800" /><path d="M5 17Q7 6 17 5" stroke={C.light} strokeWidth="2.200" /><path d="M1 1h3v3H1zM18 1h3v3h-3zM1 18h3v3H1zM18 18h3v3h-3z" stroke={C.teal} strokeWidth="1.300" fill={C.bg} /></svg></CmdTab>
            <CmdTab><svg width="20" height="22" viewBox="0 0 20 22"><path d="M2 1h16v7H2z" fill="#989898" /><path d="M10 8v5M3 17v-4h14v4" fill="none" stroke="#3d8585" strokeWidth="1.500" /><path d="M0 17h5v5H0zM15 17h5v5h-5z" fill="#3d8585" /></svg></CmdTab>
            <CmdTab><svg width="24" height="20" viewBox="0 0 24 20" fill="none"><path d="M7 2Q-3 10 7 18M10 2Q0 10 10 18" stroke="#3d8585" strokeWidth="1.500" /><circle cx="15" cy="10" r="8.500" fill="#a0a0a0" /></svg></CmdTab>
            <CmdTab><svg width="20" height="20"><path d="M0 2h20v12H0zM7 15h6v2h2v2H5v-2h2z" fill="#a0a0a0" /></svg></CmdTab>
            <CmdTab><svg width="20" height="20" viewBox="0 0 20 20"><path d="M1 4l3 2 2-2-1-3q5-1 6 5l8 9q1 3-2 3.500L9 10Q3 11 1 4z" fill="#a0a0a0" /></svg></CmdTab>
          </CmdTabs>
          <CmdBody>
            <NameRow><NameField>Box001</NameField><Swatch /></NameRow>
            <ModCombo $w={240}>Modifier List<Arrow /></ModCombo>
            <Stack>
              <StackRows>
                <StackRow $sel><StackGutter $w={24} $pl={4}><Eye /></StackGutter><StackLabel $sel $indent={26}>TurboSmooth<StateBox /></StackLabel></StackRow>
                <StackRow><StackGutter $w={24}><Arrow w={9} /></StackGutter><StackLabel $indent={2}>Editable Poly<StateBox /></StackLabel></StackRow>
                {['Vertex', 'Edge', 'Border', 'Polygon'].map(n => (
                  <StackRow key={n}>
                    <svg width="34" height="21"><path d="M12.500 0v21M13 10.500h18" stroke="#0a0a0a" strokeDasharray="1 1" /></svg>
                    <StackLabel $indent={2}>{n}{n === 'Polygon' && <StateBox />}</StackLabel>
                  </StackRow>
                ))}
              </StackRows>
              <StackScroll>
                <svg width="11" height="8"><path d="M1 6.500l4.500-4.500L10 6.500" fill="none" stroke="#505050" strokeWidth="2" /></svg>
                <ScrollThumb />
                <svg width="11" height="8"><path d="M1 1.500l4.500 4.500L10 1.500" fill="none" stroke="#505050" strokeWidth="2" /></svg>
              </StackScroll>
            </Stack>
            <StackTools>
              <svg width="22" height="22" viewBox="0 0 22 22"><path d="M0 21l7-9 2 2z" fill={C.light} /><path d="M13.500 1l7.500 6.500-3 1-3.500 4 .5 4-9-8 4.500.500 3-4z" fill={C.light} /></svg>
              <StackSep $ml={8} />
              <StackTool $on $ml={6}><svg width="14" height="24" viewBox="0 0 14 24"><path d="M1 1.500h12M4 1.500V21q3 3 6 0V1.500" fill="#ddd" stroke="#555" strokeWidth="1.500" /><path d="M5.500 3h3.500v18H5.500z" fill={C.teal} /></svg></StackTool>
              <StackSep $ml={7} />
              <StackTool $ml={7}><svg width="24" height="24" viewBox="0 0 24 24" stroke="#2e2e2e"><path d="M12 4h7v7M16 9l3 4 3-4" fill="none" strokeWidth="2" /><circle cx="6" cy="6" r="5" fill="#5c5c5c" /><circle cx="13" cy="17" r="5.500" fill="#4c4c4c" /><circle cx="18" cy="17" r="5" fill="#4c4c4c" /></svg></StackTool>
              <StackTool $ml={2}><svg width="18" height="24" viewBox="0 0 18 24"><path d="M1 5h16M5.500 4V1.500h7V4" fill="none" stroke={C.light} strokeWidth="2" /><path d="M2 7h14v15.500H2z" fill={C.light} /><path d="M5.500 9.500v10M9 9.500v10M12.500 9.500v10" stroke="#333" strokeWidth="1.800" /></svg></StackTool>
              <StackSep $ml={5} />
              <StackTool $ml={7}><svg width="24" height="24" viewBox="0 0 24 24"><path d="M1 1h18v22H1z" fill={C.light} /><path d="M3 5h14" stroke="#333" strokeWidth="1.500" /><path d="M3.500 9h5v5h-5zM11 9h5v5h-5zM3.500 16h5v5h-5zM11 16h5v5h-5z" fill="none" stroke="#333" /><path d="M10 14l2-4L21 1l2.500 2.500-9 9z" fill={C.orange} stroke="#7a5510" strokeWidth=".6" /></svg></StackTool>
            </StackTools>
            <Splitter><SplitLine /><HGrip $w={14} /><SplitLine /></Splitter>
            <RollWrap>
              <Rollout>
                <GroupTail />
                <Group $h={113} $mt={5} $ls={0.25}>
                  <legend>Surface Parameters</legend>
                  <OptRow $ml={14} $h={18} $mt={7}><Check><svg width="11" height="11"><path d="M2 5l2.500 3.500L9.500 2" fill="none" stroke="#e0e0e0" strokeWidth="1.800" /></svg></Check>Smooth Result</OptRow>
                  <OptRow $ml={13} $h={22}>Separate by:</OptRow>
                  <OptRow $ml={54} $h={22}><Check />Materials</OptRow>
                  <OptRow $ml={54} $h={22}><Check />Smoothing Groups</OptRow>
                </Group>
                <Group $h={121} $mt={3}>
                  <legend>Update Options</legend>
                  <OptRow $ml={22} $h={18} $mt={7}><Radio $on />Always</OptRow>
                  <OptRow $ml={22} $h={21}><Radio />When Rendering</OptRow>
                  <OptRow $ml={22} $h={20}><Radio />Manually</OptRow>
                  <UpdateButton>Update</UpdateButton>
                </Group>
              </Rollout>
              <RollScroll><RollThumb /></RollScroll>
            </RollWrap>
          </CmdBody>
        </Command>
      </Work>

      <TimeRow>
        <VGrip $h={54} $mt={8} />
        <TimeBody>
          <SliderRow>
            <SliderButton $w={19}>&lt;</SliderButton><SliderButton $w={156}>0 / 100</SliderButton><SliderButton $w={19}>&gt;</SliderButton>
          </SliderRow>
          <TrackRow>
            <TrackKey><svg width="20" height="12" viewBox="0 0 20 12" fill="none"><path d="M1 1.500h4M1 4.500h4M1 7.500h4M1 10.500h4" stroke="#c0c0c0" /><path d="M7 7q3-10 5.500-2T19 5" stroke={C.teal} strokeWidth="1.400" /></svg></TrackKey>
            <Track />
          </TrackRow>
        </TimeBody>
      </TimeRow>

      <Status>
        <Listener><ListenerLine $pink /><ListenerLine><span>MAXScript Mini</span></ListenerLine></Listener>
        <StatusSep />
        <Info>
          <InfoRow>
            <InfoText $w={198}>1 Object Selected</InfoText>
            <S20><path d="M1 5V1h4M15 1h4v4M19 15v4h-4M5 19H1v-4" fill="none" stroke={C.light} strokeWidth="1.500" /><path d="M6 6h8v8H6z" fill={C.teal} /></S20>
            <StatusGap $w={16} />
            <svg width="14" height="20" viewBox="0 0 14 20"><path d="M3.500 9V5.500Q3.500 1.500 7 1.500t3.500 4V9" fill="none" stroke={C.light} strokeWidth="2" /><path d="M1 8.500h12V19H1z" fill={C.light} /><path d="M7 11v5" stroke="#333" strokeWidth="2" /></svg>
            <StatusGap $w={17} />
            <svg width="18" height="18" viewBox="0 0 18 18" fill="none"><path d="M1.500 1.500h15v15h-15z" stroke={C.light} strokeWidth="1.800" /><circle cx="9" cy="9" r="3.500" stroke={C.light} strokeWidth="1.800" /><path d="M9 2v4M9 12v4M2 9h4M12 9h4" stroke={C.light} strokeWidth="1.800" /></svg>
            <InfoText $w={16} $ml={10}>X:</InfoText><Coord>107,192<Spin /></Coord>
            <InfoText $w={14} $ml={3}>Y:</InfoText><Coord>-14,909<Spin /></Coord>
            <InfoText $w={14} $ml={3}>Z:</InfoText><Coord>61,318<Spin /></Coord>
            <InfoText $w={80} $ml={4}>Grid = 10,0</InfoText>
          </InfoRow>
          <InfoRow>
            <InfoText $w={573}>Click and drag to select and move objects</InfoText>
            <SmallSep />
            <TagToggle><svg width="16" height="18" viewBox="0 0 16 18" fill="none"><path d="M8 1l7 4v8l-7 4-7-4V5zM1 5l7 4 7-4M8 9v8" stroke="#303030" strokeWidth="2.400" /><path d="M8 1l7 4v8l-7 4-7-4V5zM3 6l5 3 5-3M8 9v6" stroke="#d8d8d8" strokeWidth="1.200" /></svg></TagToggle>
            <InfoText $w={90} $dim>Add Time Tag</InfoText>
          </InfoRow>
        </Info>
        <Playback>
          <PlayRow>
            <svg width="156" height="22" viewBox="881.500 791 156 22" fill={C.light}>
              <path d="M881.500 794h3v14h-3zM892 795v12l-7-6zM899.500 795v12l-7-6z" /><path d="M905 791h1v20h-1zM992 791h1v20h-1z" fill="#161616" />
              <path d="M920 795v12l-8-6zM922 795h3v13h-3zM927 795h3v13h-3zM942 792v19l15-9.500zM968 795h3v13h-3zM973 795h3v13h-3zM978 795v12l8-6zM999 795v12l7-6zM1006.500 795v12l7-6zM1014.500 794h3v14h-3zM961 808v5h-5z" />
            </svg>
          </PlayRow>
          <PlayRow>
            <svg width="24" height="12" viewBox="0 0 24 12" fill={C.light}><path d="M7 1v10L1 6zM11 1v10l6-5z" /></svg>
            <SmallSep />
            <Coord $w={87}>0<Spin /></Coord><SmallSep />
            <StatusGap $w={6} />
            <svg width="20" height="20" viewBox="0 0 20 20"><circle cx="7.500" cy="7.500" r="7" fill={C.light} /><path d="M7.500 3v5h5" fill="none" stroke="#333" strokeWidth="1.500" /><circle cx="13.500" cy="14" r="3.300" fill="#444" stroke={C.orange} strokeWidth="2" /><circle cx="13.500" cy="14" r="4.800" fill="none" stroke={C.orange} strokeWidth="1.500" strokeDasharray="2 1.800" /></svg>
          </PlayRow>
        </Playback>
        <KeyPad><svg width="38" height="38" viewBox="0 0 38 38"><path d="M13.500 1.500h8v12h12v7h-12v12h-8v-12H1.500v-7h12z" fill={C.light} {...o} /><g fill="none"><circle cx="22" cy="29" r="4" stroke="#333" strokeWidth="4.500" /><path d="M25 26l9-8M30 22l3 3" stroke="#333" strokeWidth="5" /><circle cx="22" cy="29" r="4" stroke="#3f9d9d" strokeWidth="2.500" /><path d="M25 26l9-8M30 21l3 3M33 18.500l2 2" stroke="#3f9d9d" strokeWidth="2.500" /></g></svg></KeyPad>
        <Column $w={59} $ml={4}><Push $w={59}>Auto</Push><Push $w={59}>Set K.</Push></Column>
        <Column $w={143} $ml={4} $gap={2}>
          <Combo $w={143} $h={23} $fs={12.5}>Selected<Arrow /></Combo>
          <FilterRow>
            <svg width="22" height="22" viewBox="0 0 22 22" fill="none"><path d="M2 19Q6 14 6 3M18 19Q13 14 13 3" stroke={C.teal} strokeWidth="2.200" /><path d="M7.500 1h4v4h-4z" stroke={C.light} /><circle cx="2.500" cy="3" r="2" fill={C.light} /><circle cx="17" cy="3" r="2" fill={C.light} /><path d="M22 16v5h-5z" fill="#e8e8e8" /></svg>
            <Push $w={111}>Filters...</Push>
          </FilterRow>
        </Column>
        <NavGrid>{navIcons.map(([g, fly], i) => <NavCell key={i} $fly={fly}><S20>{g}</S20></NavCell>)}</NavGrid>
      </Status>
    </Window>
  );
}
